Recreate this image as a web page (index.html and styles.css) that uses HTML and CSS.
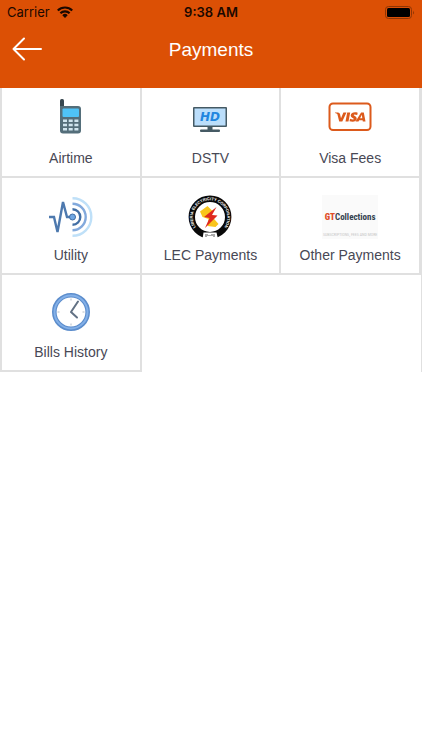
FILE: index.html
```html
<!DOCTYPE html>
<html lang="en">
<head>
<meta charset="utf-8">
<meta name="viewport" content="width=device-width, initial-scale=1">
<title>Payments</title>
<link rel="stylesheet" href="styles.css">
</head>
<body>
<header class="header">
  <div class="status">
    <div class="carrier">
      <span>Carrier</span>
      <svg width="16" height="12" viewBox="0 0 16 12" aria-hidden="true">
        <g fill="none" stroke="#1a0800" stroke-width="2.2">
          <path d="M.8 4.5a10.2 10.2 0 0 1 14.4 0"/>
          <path d="M3.4 7.3a6.5 6.5 0 0 1 9.2 0"/>
        </g>
        <path d="M8 12 5.3 9.2a3.8 3.8 0 0 1 5.4 0z" fill="#1a0800"/>
      </svg>
    </div>
    <span class="time">9:38 AM</span>
    <svg class="battery" width="30" height="13" viewBox="0 0 30 13" aria-hidden="true">
      <rect x=".5" y=".5" width="26" height="12" rx="3" fill="none" stroke="#8f3504"/>
      <rect x="2" y="2" width="23" height="9" rx="1.5" fill="#000"/>
      <path d="M28 4.5q1.8 2 0 4z" fill="#8f3504"/>
    </svg>
  </div>
  <div class="navbar">
    <button class="back" type="button" aria-label="Back">
      <svg width="30" height="24" viewBox="0 0 30 24" aria-hidden="true">
        <path d="M12 1.500 1.500 12 12 22.500M1.500 12H29" fill="none" stroke="#fff" stroke-width="2" stroke-linecap="round" stroke-linejoin="round"/>
      </svg>
    </button>
    <h1 class="title">Payments</h1>
  </div>
</header>
<main class="grid">
  <a class="cell" href="#airtime">
    <svg class="icon" viewBox="0 0 44 44" aria-hidden="true">
      <rect x="11" y="1" width="4" height="12" rx="1.500" fill="#37474f"/>
      <path d="M11 8H29a3 3 0 0 1 3 3V32.500a3 3 0 0 1-3 3H14a3 3 0 0 1-3-3z" fill="#546e7a"/>
      <rect x="13.500" y="10.500" width="16.500" height="8.500" rx="1" fill="#4fc3f7"/>
      <g fill="#cfe4ee">
        <path d="M14 21.500h4V24h-4zM19.700 21.500h4V24h-4zM25.400 21.500h4V24h-4z"/>
        <path d="M14 25.800h4v2.500h-4zM19.700 25.800h4v2.500h-4zM25.400 25.800h4v2.500h-4z"/>
        <path d="M14 30.100h4v2.500h-4zM19.700 30.100h4v2.500h-4zM25.400 30.100h4v2.500h-4z"/>
      </g>
    </svg>
    <span class="label">Airtime</span>
  </a>
  <a class="cell" href="#dstv">
    <svg class="icon" viewBox="0 0 44 44" aria-hidden="true">
      <path d="M19.500 28h5v4h-5z" fill="#455a64"/>
      <rect x="12" y="31.500" width="20" height="2.500" rx="1" fill="#455a64"/>
      <rect x="5" y="9" width="34" height="20" rx="1" fill="#455a64"/>
      <rect x="6.500" y="10.500" width="31" height="17" fill="#bbdefb"/>
      <text class="hd" x="22" y="23" text-anchor="middle">HD</text>
    </svg>
    <span class="label">DSTV</span>
  </a>
  <a class="cell" href="#visa">
    <svg class="icon" viewBox="0 0 44 44" aria-hidden="true">
      <rect x="1.500" y="5.500" width="41" height="26.500" rx="3.500" fill="#fff" stroke="#dc5a1c" stroke-width="2"/>
      <path transform="translate(-.5 -2.500)" d="M7.500 17h3q1.600 0 2 1.600l1 4.100 2.400-5.700h3.100L14.800 26h-3.100L9.900 18.800Q9.300 17.800 7.500 17.600zM19.700 17h3L21 26h-3zM30.200 17.200l-.5 2.300q-3.300-1.100-3.500 0c0 .9 3.200 1.200 3 3.800-.3 3-3.900 3.400-7.200 2.400l.5-2.400q3.500 1.200 3.700.1c.1-.9-3.100-1.200-3-3.700.2-2.800 3.900-3.500 7-2.500zM33.600 17h2.700L38 26h-2.700l-.2-1.300h-3.400l-.7 1.300h-3zM34.300 19.300l-1.700 3.500h2.200z" fill="#dc5a1c" fill-rule="evenodd"/>
    </svg>
    <span class="label">Visa Fees</span>
  </a>
  <a class="cell" href="#utility">
    <svg class="icon" viewBox="0 0 44 44" aria-hidden="true">
      <g fill="none" stroke-width="2.400">
        <path d="M23.500 3.200a18.800 18.800 0 0 1 0 37.600" stroke="#bfe0f8"/>
        <path d="M23.500 8.800a13.200 13.200 0 0 1 0 26.400" stroke="#82a9dc"/>
        <path d="M23.500 14.200a7.800 7.800 0 0 1 0 15.600" stroke="#416ea4"/>
        <path d="M0 22H5L8.500 37 14 7 18 22H22" stroke="#4d79ae" stroke-linejoin="miter"/>
      </g>
      <circle cx="23.500" cy="22" r="3" fill="#70a7e3" stroke="#416ea4"/>
    </svg>
    <span class="label">Utility</span>
  </a>
  <a class="cell" href="#lec">
    <svg class="icon" viewBox="0 0 44 44" aria-hidden="true">
      <defs><path id="ring" d="M12.200 36.500A17.200 17.200 0 1 1 31.800 36.500"/></defs>
      <circle cx="22" cy="22" r="18.200" fill="#fff" stroke="#090909" stroke-width="6.400"/>
      <text class="seal"><textPath href="#ring" startOffset="50%" text-anchor="middle">LIBERIA ELECTRICITY CORPORATION</textPath></text>
      <path d="M12 16.500 19.500 11l5 5-1 5 7 8-3 3-8-1 1-7-6-2z" fill="#f9c51c"/>
      <path d="M28.500 12 16 22l5.500 1L17 33l12.500-12.500-5.500-.5z" fill="#df291d"/>
      <path d="M15.500 37.500h13l1.500 6.500H14.500z" fill="#fff"/>
      <path d="M17 39h3v1h3v-1h4v3h-2v-1h-6v1h-2z" fill="#aaa"/>
    </svg>
    <span class="label">LEC Payments</span>
  </a>
  <a class="cell" href="#other">
    <span class="icon gt">
      <span class="gt-name"><b class="gt-red">GT</b>Collections</span>
      <span class="gt-tag">SUBSCRIPTIONS, FEES AND MORE</span>
    </span>
    <span class="label">Other Payments</span>
  </a>
  <a class="cell" href="#history">
    <svg class="icon" viewBox="0 0 44 44" aria-hidden="true">
      <circle cx="22" cy="20" r="16.700" fill="#fff" stroke="#5c8dcc" stroke-width="4.600"/>
      <circle cx="22" cy="20" r="16.500" fill="none" stroke="#83b0e8" stroke-width="2"/>
      <path d="M22 6.500V8.500M22 31.500v2M8.500 20h2M33.500 20h2" stroke="#b5bdc6" stroke-width="1"/>
      <path d="M29 9.500 22 20l6 5.500" fill="none" stroke="#627184" stroke-width="2" stroke-linecap="round" stroke-linejoin="round"/>
    </svg>
    <span class="label">Bills History</span>
  </a>
</main>
</body>
</html>
```
FILE: styles.css
```css
* { box-sizing: border-box; }
body {
  margin: 0;
  background: #fff;
  font-family: "Liberation Sans", Arial, sans-serif;
}
.header {
  position: relative;
  z-index: 1;
  background: #dc5005;
  padding-bottom: 20px;
}
.status {
  display: grid;
  grid-template-columns: 1fr auto 1fr;
  align-items: center;
  height: 24px;
  padding: 0 7px;
  font-family: Inter, sans-serif;
  font-size: 13px;
  color: #1a0800;
}
.carrier { display: flex; align-items: center; gap: 7px; }
.time { font-weight: 600; }
.battery { justify-self: end; }
.navbar {
  display: grid;
  grid-template-columns: 44px 1fr 44px;
  align-items: center;
  height: 44px;
  padding: 6px 12px 0;
}
.back {
  display: flex;
  padding: 0;
  border: 0;
  background: none;
}
.title {
  margin: 0;
  padding-top: 2px;
  text-align: center;
  font-size: 19px;
  font-weight: 400;
  line-height: 24px;
  color: #fff;
}
.grid {
  display: grid;
  grid-template-columns: repeat(3, 1fr);
  margin-top: -7px;
  border: solid #e0e0e0;
  border-width: 0 1px 0 2px;
}
.cell {
  display: flex;
  flex-direction: column;
  align-items: center;
  gap: 6px;
  padding: 17px 0 8px;
  border: solid #e0e0e0;
  border-width: 0 2px 2px 0;
  color: #484855;
  text-decoration: none;
}
.icon { width: 44px; height: 44px; }
.label { font-size: 14px; line-height: 20px; }
.hd { font: italic bold 12px "DejaVu Sans", sans-serif; fill: #2186df; }
.seal { font: bold 4px "Liberation Sans", sans-serif; fill: #fff; }
.gt {
  display: flex;
  flex-direction: column;
  align-items: center;
  justify-content: flex-end;
  width: 56px;
  background: #fafafa;
  white-space: nowrap;
}
.gt-name {
  font: bold 9px/28px "Roboto Condensed", Roboto, sans-serif;
  color: #34414e;
}
.gt-red { color: #df4d28; }
.gt-tag {
  font: 4px/8px "Roboto Condensed", Roboto, sans-serif;
  color: #c8c8c8;
}
```
